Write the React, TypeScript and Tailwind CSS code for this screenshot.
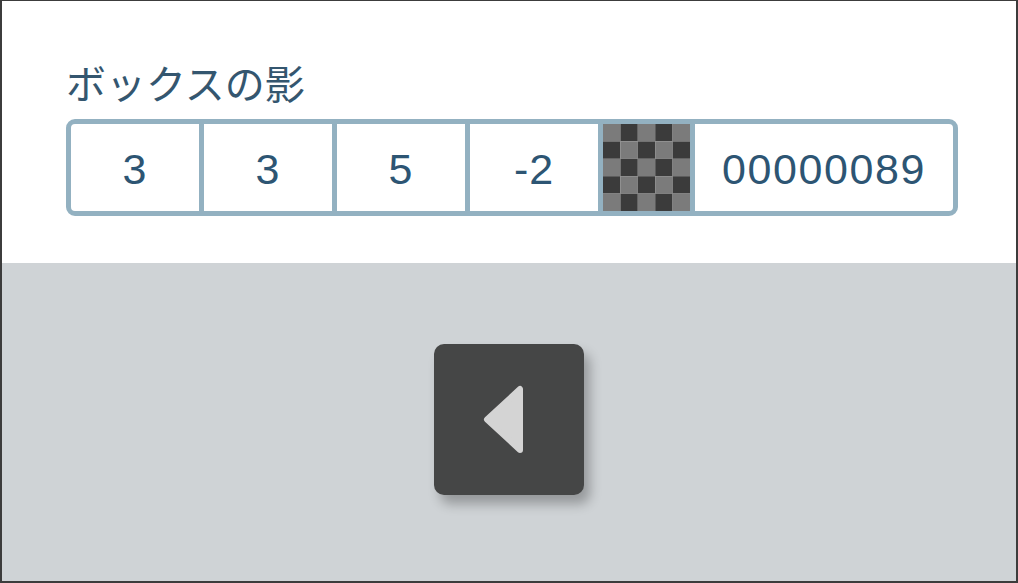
import React from 'react';

const values = ['3', '3', '5', '-2'];

function Cell({ value, first }: { value: string; first?: boolean }) {
    return (
        <div
            className={`h-full flex items-center justify-center shrink-0 pt-[4px] ${first ? 'w-[128px]' : 'w-[133px] border-l-[5px] border-[#93b1c1]'}`}
        >
            <span className="text-[43px] leading-none tracking-[1px] text-[#2d5573] font-['Liberation_Sans',Arial,sans-serif]">{value}</span>
        </div>
    );
}

function Checker() {
    const squares = [];
    for (let r = 0; r < 5; r++) {
        for (let c = 0; c < 5; c++) {
            squares.push(
                <rect key={`${r}-${c}`} x={c * 17.4} y={r * 17.4} width="17.4" height="17.4" fill={(r + c) % 2 === 0 ? '#7b7b7b' : '#3b3b3b'} />
            );
        }
    }
    return (
        <svg width="87" height="87" viewBox="0 0 87 87" className="block">
            {squares}
        </svg>
    );
}

export default function App() {
    return (
        <div className="w-[1018px] h-[583px] flex flex-col border-2 border-t border-[#3c3c3c] overflow-hidden">
            {/* Shadow settings */}
            <div className="h-[262px] bg-white pl-[64px] pt-[57px] shrink-0">
                <div className="h-[61px] text-[40px] leading-[48px] text-[#34566f] font-['Noto_Sans_CJK_JP',sans-serif]">
                    ボックスの影
                </div>
                <div className="w-[892px] h-[97px] flex border-[5px] border-[#93b1c1] rounded-[9px] overflow-hidden">
                    {values.map((v, i) => (
                        <Cell key={i} value={v} first={i === 0} />
                    ))}
                    <div className="w-[92px] h-full shrink-0 border-l-[5px] border-[#93b1c1] overflow-hidden">
                        <Checker />
                    </div>
                    <div className="flex-1 h-full flex items-center justify-center pt-[4px] border-l-[5px] border-[#93b1c1]">
                        <span className="text-[43px] leading-none tracking-[1.6px] text-[#2d5573] font-['Liberation_Sans',Arial,sans-serif]">00000089</span>
                    </div>
                </div>
            </div>

            {/* Back button area */}
            <div className="flex-1 bg-[#cfd3d6] flex justify-center pt-[81px]">
                <button className="w-[150px] h-[151px] rounded-[10px] bg-[#454646] shadow-[6px_9px_12px_rgba(0,0,0,0.28)] flex items-center pl-[49px]">
                    <svg width="41" height="69" viewBox="0 0 41 69">
                        <polygon
                            points="37,4 37,65 4,34.5"
                            fill="#d4d4d4"
                            stroke="#d4d4d4"
                            strokeWidth="6"
                            strokeLinejoin="round"
                        />
                    </svg>
                </button>
            </div>
        </div>
    );
}
